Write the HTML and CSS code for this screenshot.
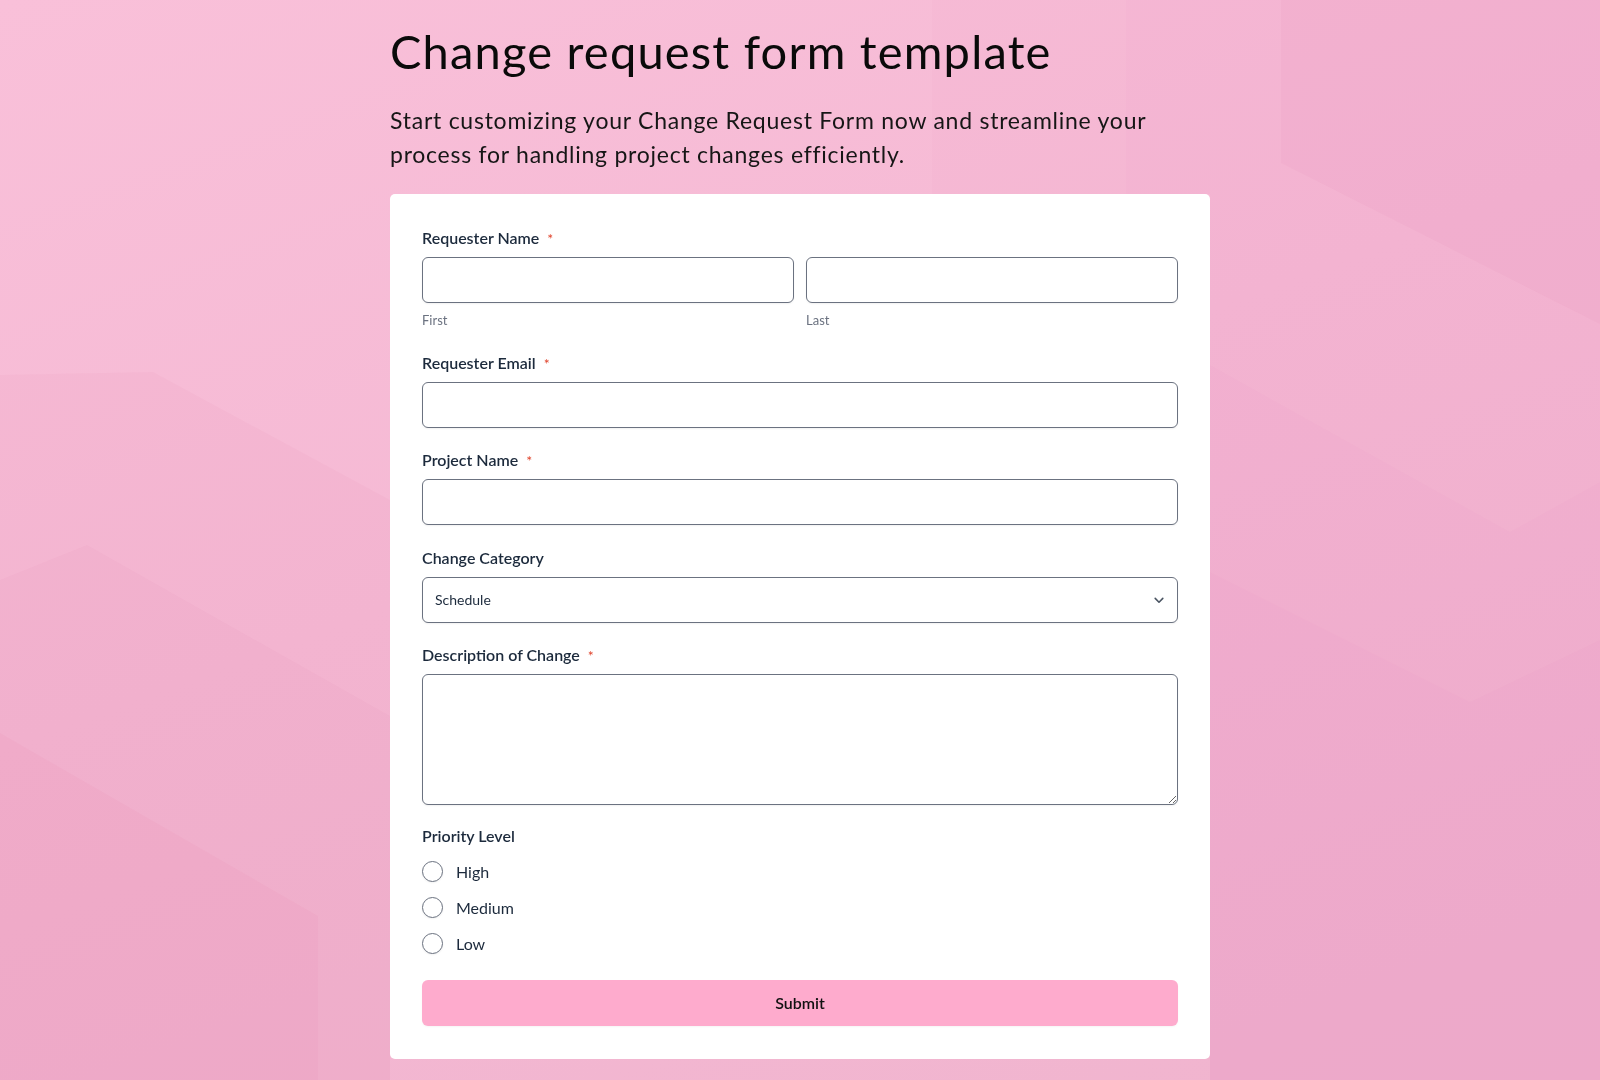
FILE: index.html
```html
<!DOCTYPE html>
<html lang="en">
<head>
<meta charset="utf-8">
<title>Change request form template</title>
<link rel="stylesheet" href="styles.css">
</head>
<body>
<svg class="bg" width="1600" height="1080" viewBox="0 0 1600 1080" aria-hidden="true">
  <polygon class="shade" points="0,375 153,372 390,500 390,1080 0,1080"/>
  <polygon class="shade" points="0,580 87,545 390,716 390,1080 0,1080"/>
  <polygon class="shade" points="0,733 318,916 318,1080 0,1080"/>
  <polygon class="shade-light" points="932,0 1600,0 1600,1080 1210,1080 1210,194 932,194"/>
  <polygon class="shade-light" points="1126,0 1600,0 1600,1080 1210,1080 1210,194 1126,194"/>
  <polygon class="shade" points="1281,0 1600,0 1600,324 1281,163"/>
  <polygon class="shade-light" points="1210,365 1510,532 1600,482 1600,1080 1210,1080"/>
  <polygon class="shade-light" points="1210,572 1470,702 1600,640 1600,1080 1210,1080"/>
</svg>
<main class="page">
  <h1 class="title">Change request form template</h1>
  <p class="intro">Start customizing your Change Request Form now and streamline your process for handling project changes efficiently.</p>
  <form class="card">
    <div class="field">
      <label class="label">Requester Name <span class="req">*</span></label>
      <div class="name-row">
        <div class="name-col">
          <input class="input" type="text">
          <span class="sublabel">First</span>
        </div>
        <div class="name-col">
          <input class="input" type="text">
          <span class="sublabel">Last</span>
        </div>
      </div>
    </div>
    <div class="field">
      <label class="label">Requester Email <span class="req">*</span></label>
      <input class="input" type="email">
    </div>
    <div class="field">
      <label class="label">Project Name <span class="req">*</span></label>
      <input class="input" type="text">
    </div>
    <div class="field">
      <label class="label">Change Category</label>
      <div class="select-wrap">
        <select class="input select">
          <option>Schedule</option>
          <option>Scope</option>
          <option>Budget</option>
        </select>
        <svg class="chevron" width="10" height="7" viewBox="0 0 10 7" aria-hidden="true"><path d="M1.2 1.4 L5 5.2 L8.8 1.4" fill="none" stroke="#4b5563" stroke-width="1.6" stroke-linecap="round" stroke-linejoin="round"/></svg>
      </div>
    </div>
    <div class="field">
      <label class="label">Description of Change <span class="req">*</span></label>
      <textarea class="input textarea"></textarea>
    </div>
    <div class="field field-radio">
      <label class="label label-radio">Priority Level</label>
      <div class="radios">
        <label class="radio"><input type="radio" name="p"><span>High</span></label>
        <label class="radio"><input type="radio" name="p"><span>Medium</span></label>
        <label class="radio"><input type="radio" name="p"><span>Low</span></label>
      </div>
    </div>
    <button class="submit" type="button">Submit</button>
  </form>
</main>
</body>
</html>
```
FILE: styles.css
```css
html, body {
  margin: 0;
  padding: 0;
}
body {
  min-height: 1080px;
  background: linear-gradient(160deg, #f9c0d9 0%, #f5b9d4 45%, #f0b4ce 100%);
  font-family: "Lato", "Liberation Sans", sans-serif;
  overflow: hidden;
}
.bg {
  position: fixed;
  left: 0;
  top: 0;
  z-index: 0;
}
.shade { fill: rgba(200, 70, 130, 0.04); }
.shade-light { fill: rgba(200, 70, 130, 0.02); }

.page {
  position: relative;
  z-index: 1;
  width: 820px;
  margin: 0 auto;
  padding-top: 23px;
}
.title {
  margin: 0;
  font-size: 47px;
  line-height: 56px;
  letter-spacing: 1.2px;
  font-weight: 400;
  color: #0a0a0a;
}
.intro {
  margin: 24px 0 0;
  font-size: 23px;
  line-height: 34px;
  letter-spacing: 0.75px;
  color: #161616;
  max-width: 800px;
}
.card {
  margin-top: 23px;
  background: #fff;
  border-radius: 5px;
  padding: 32px 32px 33px;
  display: flex;
  flex-direction: column;
  gap: 20.5px;
}
.field {
  display: flex;
  flex-direction: column;
}
.field-radio {
  margin-top: -2px;
}
.label {
  font-size: 16px;
  line-height: 24px;
  font-weight: 600;
  color: #1c2a3c;
  margin-bottom: 7px;
}
.req {
  color: #e0452e;
  font-size: 14px;
  line-height: 1;
  font-weight: 400;
  margin-left: 4px;
}
.input {
  box-sizing: border-box;
  width: 100%;
  height: 46px;
  border: 1px solid #6b7280;
  border-radius: 6px;
  background: #fff;
  box-shadow: 0 1px 2px rgba(0, 0, 0, 0.06);
  font-family: "Lato", "Liberation Sans", sans-serif;
  font-size: 14px;
  padding: 0 12px;
  margin: 0;
  color: #1c2a3c;
}
.name-row {
  display: flex;
  gap: 12px;
}
.name-col {
  flex: 1;
  display: flex;
  flex-direction: column;
}
.sublabel {
  margin-top: 8px;
  font-size: 13px;
  line-height: 19px;
  color: #6b7280;
}
.select-wrap {
  position: relative;
}
.select {
  appearance: none;
  -webkit-appearance: none;
}
.chevron {
  position: absolute;
  right: 14px;
  top: 20px;
  pointer-events: none;
}
.textarea {
  height: 131px;
  resize: vertical;
  padding: 10px 12px;
  display: block;
}
.label-radio {
  margin-bottom: 12px;
}
.radios {
  display: flex;
  flex-direction: column;
  gap: 12px;
}
.radio {
  display: flex;
  align-items: center;
  height: 24px;
  font-size: 16px;
  color: #1c2a3c;
}
.radio input {
  appearance: none;
  -webkit-appearance: none;
  width: 21px;
  height: 21px;
  margin: 0 13px 0 0;
  border: 1px solid #6b7280;
  border-radius: 50%;
  background: #fff;
  box-shadow: 0 1px 2px rgba(0, 0, 0, 0.06);
}
.submit {
  margin-top: 3.5px;
  height: 46px;
  border: none;
  border-radius: 6px;
  background: #feabcd;
  font-family: "Lato", "Liberation Sans", sans-serif;
  font-size: 16px;
  font-weight: 600;
  color: #111;
  box-shadow: 0 1px 2px rgba(0, 0, 0, 0.04);
}
```
